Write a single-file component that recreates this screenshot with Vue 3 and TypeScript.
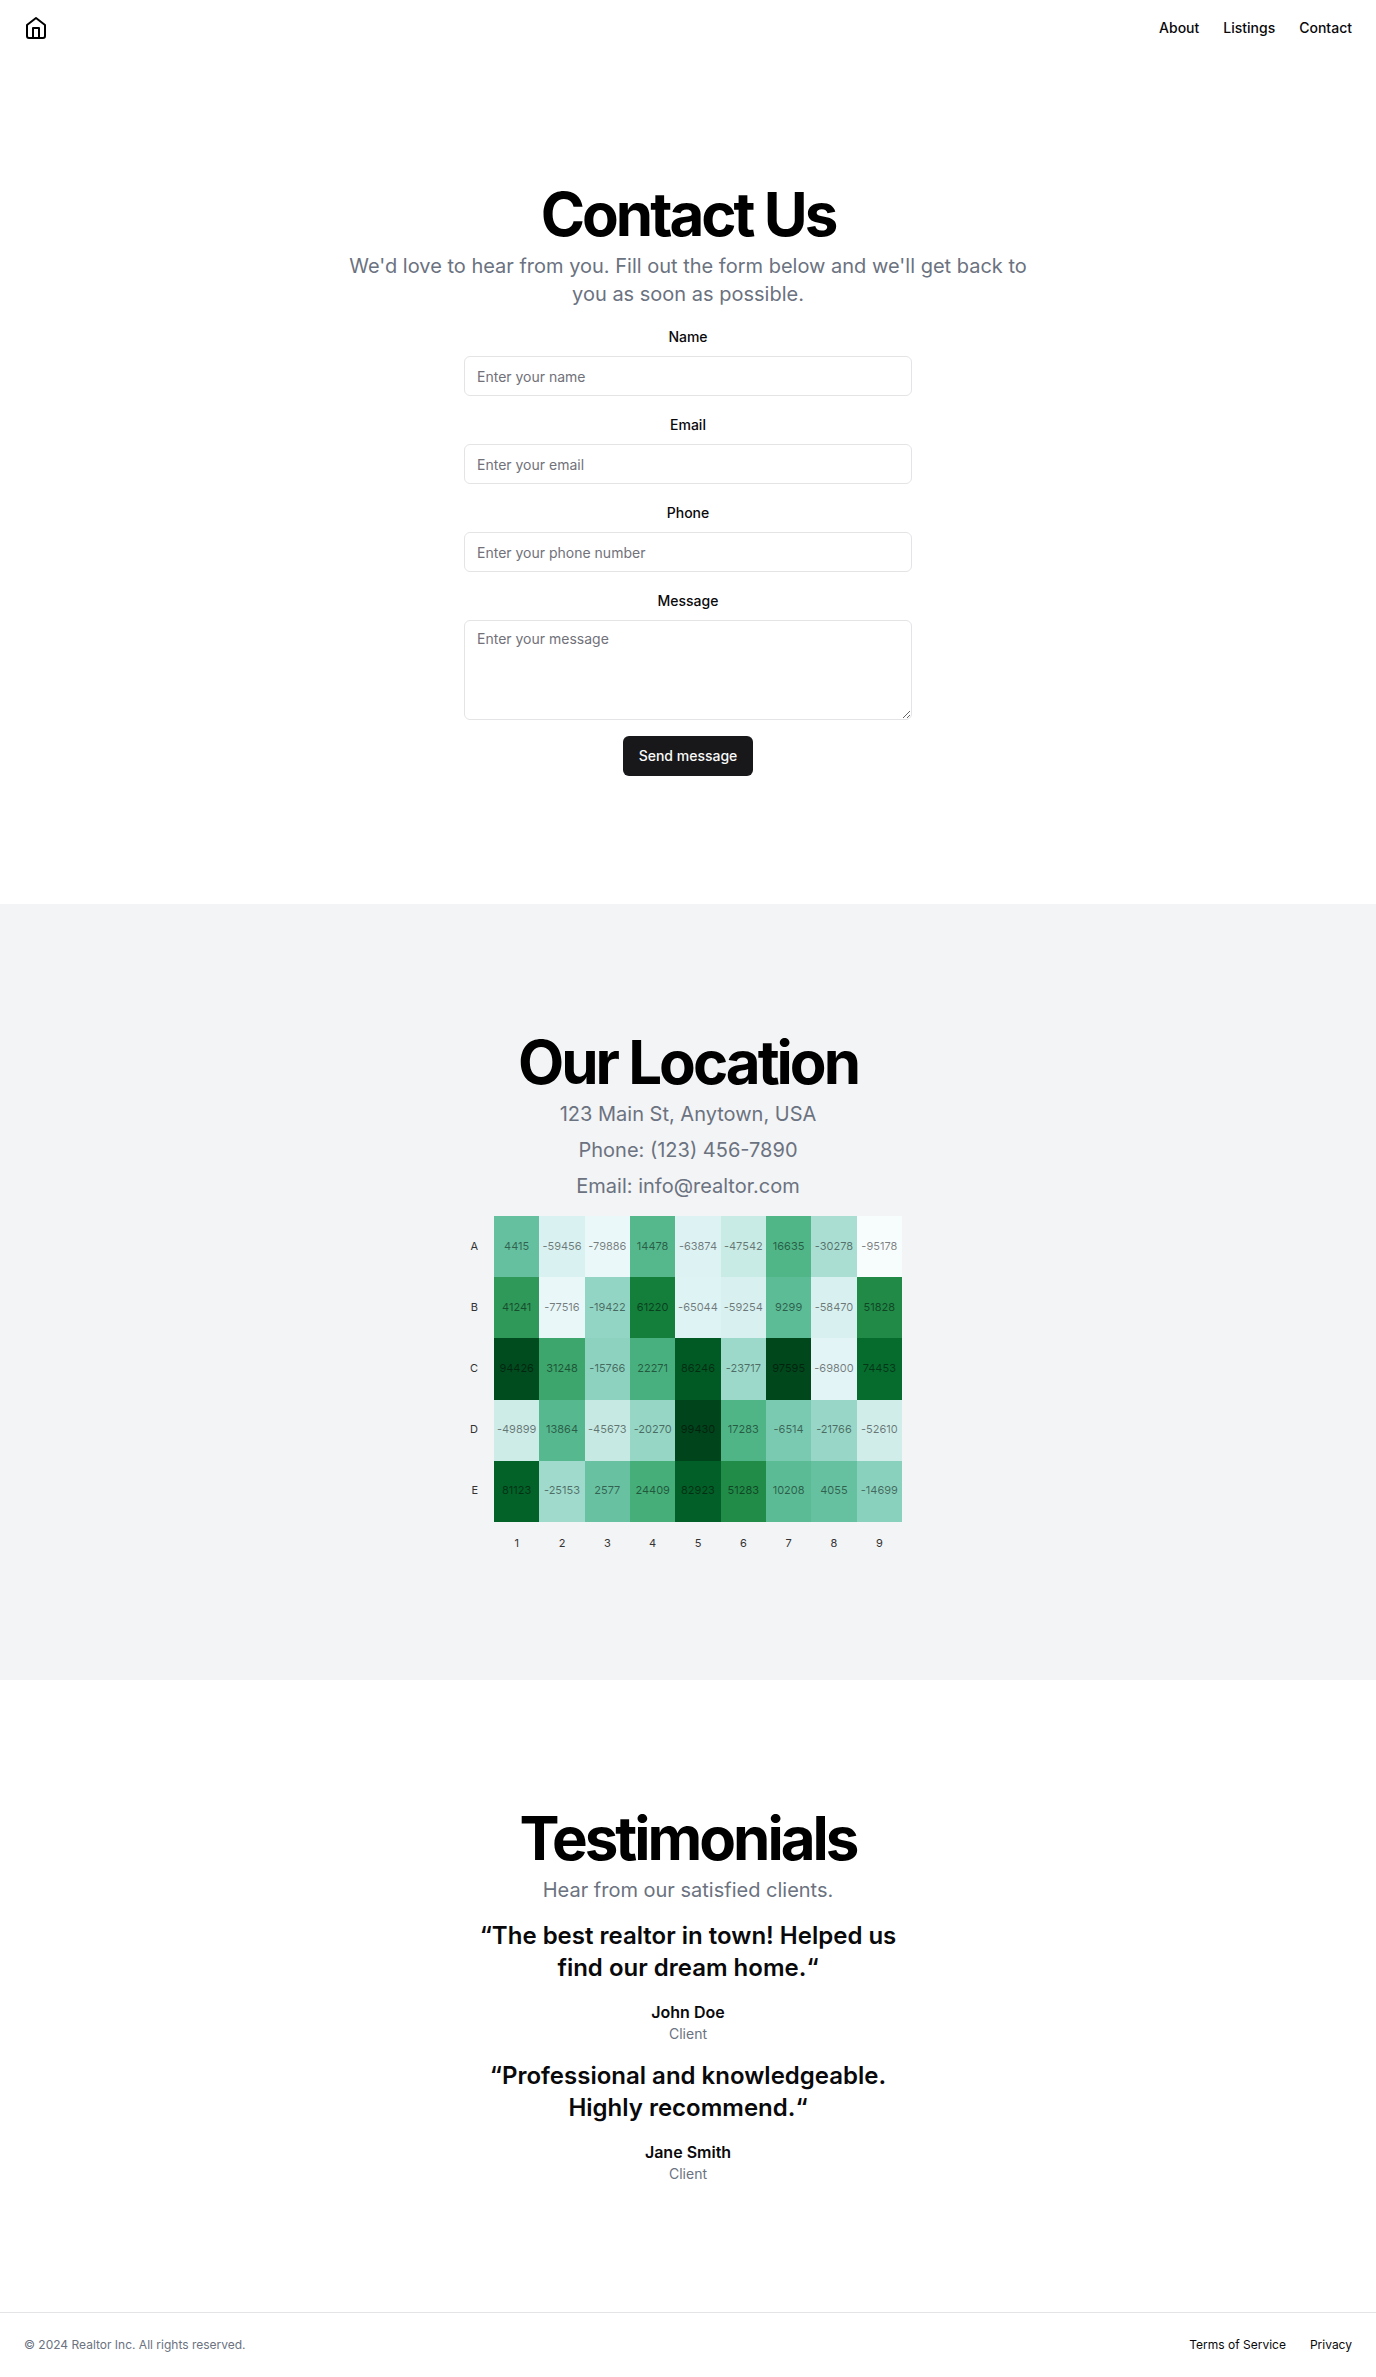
<script setup lang="ts">
import { ref } from 'vue'

interface Field {
  id: string
  label: string
  type: string
  placeholder: string
}

interface Testimonial {
  quote: string
  name: string
  role: string
}

interface HeatRow {
  id: string
  values: number[]
}

const fields: Field[] = [
  { id: 'name', label: 'Name', type: 'text', placeholder: 'Enter your name' },
  { id: 'email', label: 'Email', type: 'email', placeholder: 'Enter your email' },
  { id: 'phone', label: 'Phone', type: 'tel', placeholder: 'Enter your phone number' },
]

const form = ref<Record<string, string>>({ name: '', email: '', phone: '', message: '' })

const testimonials: Testimonial[] = [
  {
    quote: '“The best realtor in town! Helped us find our dream home.“',
    name: 'John Doe',
    role: 'Client',
  },
  {
    quote: '“Professional and knowledgeable. Highly recommend.“',
    name: 'Jane Smith',
    role: 'Client',
  },
]

const rows: HeatRow[] = [
  { id: 'A', values: [4415, -59456, -79886, 14478, -63874, -47542, 16635, -30278, -95178] },
  { id: 'B', values: [41241, -77516, -19422, 61220, -65044, -59254, 9299, -58470, 51828] },
  { id: 'C', values: [94426, 31248, -15766, 22271, 86246, -23717, 97595, -69800, 74453] },
  { id: 'D', values: [-49899, 13864, -45673, -20270, 99430, 17283, -6514, -21766, -52610] },
  { id: 'E', values: [81123, -25153, 2577, 24409, 82923, 51283, 10208, 4055, -14699] },
]

// Blue-green sequential scheme, light to dark
const stops: number[][] = [
  [247, 252, 253],
  [229, 245, 249],
  [204, 236, 230],
  [153, 216, 201],
  [102, 194, 164],
  [65, 174, 118],
  [35, 139, 69],
  [0, 109, 44],
  [0, 68, 27],
]

const all = rows.flatMap((row) => row.values)
const min = Math.min(...all)
const max = Math.max(...all)

// Uniform B-spline through one colour channel of the scheme
function channel(t: number, c: number): number {
  const n = stops.length - 1
  const i = Math.min(Math.floor(t * n), n - 1)
  const v1 = stops[i][c]
  const v2 = stops[i + 1][c]
  const v0 = i > 0 ? stops[i - 1][c] : 2 * v1 - v2
  const v3 = i < n - 1 ? stops[i + 2][c] : 2 * v2 - v1
  const u = t * n - i
  const u2 = u * u
  const u3 = u2 * u
  const sum =
    (1 - 3 * u + 3 * u2 - u3) * v0 +
    (4 - 6 * u2 + 3 * u3) * v1 +
    (1 + 3 * u + 3 * u2 - 3 * u3) * v2 +
    u3 * v3
  return Math.max(0, Math.min(255, Math.round(sum / 6)))
}

function cellColor(value: number): string {
  const t = (value - min) / (max - min)
  return `rgb(${channel(t, 0)}, ${channel(t, 1)}, ${channel(t, 2)})`
}
</script>

<template>
  <div class="page">
    <header class="header">
      <a href="#" class="logo" aria-label="Home">
        <svg viewBox="0 0 24 24" width="24" height="24" fill="none" stroke="currentColor" stroke-width="2" stroke-linecap="round" stroke-linejoin="round" aria-hidden="true">
          <path d="m3 9 9-7 9 7v11a2 2 0 0 1-2 2H5a2 2 0 0 1-2-2z" />
          <polyline points="9 22 9 12 15 12 15 22" />
        </svg>
      </a>
      <nav class="nav">
        <a href="#">About</a>
        <a href="#">Listings</a>
        <a href="#">Contact</a>
      </nav>
    </header>

    <main>
      <section class="section">
        <div class="intro">
          <h2>Contact Us</h2>
          <p>We'd love to hear from you. Fill out the form below and we'll get back to you as soon as possible.</p>
        </div>
        <form class="narrow form" @submit.prevent>
          <div v-for="field in fields" :key="field.id" class="field">
            <label :for="field.id">{{ field.label }}</label>
            <input :id="field.id" v-model="form[field.id]" :type="field.type" :placeholder="field.placeholder" />
          </div>
          <div class="field">
            <label for="message">Message</label>
            <textarea id="message" v-model="form.message" placeholder="Enter your message"></textarea>
          </div>
          <button type="submit">Send message</button>
        </form>
      </section>

      <section class="section muted">
        <div class="intro">
          <h2>Our Location</h2>
          <p>123 Main St, Anytown, USA</p>
          <p>Phone: (123) 456-7890</p>
          <p>Email: info@realtor.com</p>
        </div>
        <div class="narrow chart">
          <table class="heatmap">
            <tbody>
              <tr v-for="row in rows" :key="row.id">
                <th scope="row">{{ row.id }}</th>
                <td v-for="(value, i) in row.values" :key="i" :style="{ backgroundColor: cellColor(value) }">{{ value }}</td>
              </tr>
            </tbody>
            <tfoot>
              <tr>
                <td></td>
                <th v-for="n in 9" :key="n" scope="col">{{ n }}</th>
              </tr>
            </tfoot>
          </table>
        </div>
      </section>

      <section class="section">
        <div class="intro">
          <h2>Testimonials</h2>
          <p>Hear from our satisfied clients.</p>
        </div>
        <div class="narrow quotes">
          <figure v-for="item in testimonials" :key="item.name">
            <blockquote>{{ item.quote }}</blockquote>
            <figcaption>
              <div class="name">{{ item.name }}</div>
              <div class="role">{{ item.role }}</div>
            </figcaption>
          </figure>
        </div>
      </section>
    </main>

    <footer class="footer">
      <p>© 2024 Realtor Inc. All rights reserved.</p>
      <nav>
        <a href="#">Terms of Service</a>
        <a href="#">Privacy</a>
      </nav>
    </footer>
  </div>
</template>

<style>
body {
  margin: 0;
  background: #fff;
}
</style>

<style scoped>
.page {
  font-family: Inter, 'Liberation Sans', sans-serif;
  font-size: 16px;
  line-height: 24px;
  color: #09090b;
}

.page * {
  box-sizing: border-box;
}

a {
  color: inherit;
  text-decoration: none;
}

h2,
p,
figure,
blockquote {
  margin: 0;
}

.header {
  display: flex;
  align-items: center;
  justify-content: space-between;
  height: 56px;
  padding: 0 24px;
}

.logo {
  display: flex;
  color: #000;
}

.nav {
  display: flex;
  gap: 24px;
  font-size: 14px;
  font-weight: 500;
  line-height: 20px;
}

.section {
  display: flex;
  flex-direction: column;
  align-items: center;
  gap: 16px;
  padding: 128px 24px;
  text-align: center;
}

.muted {
  background: #f3f4f6;
}

.intro {
  display: flex;
  flex-direction: column;
  gap: 8px;
  width: 100%;
  max-width: 700px;
}

h2 {
  font-size: 60px;
  font-weight: 700;
  line-height: 60px;
  letter-spacing: -3px;
  color: #000;
}

.intro p {
  font-size: 20px;
  line-height: 28px;
  color: #6b7280;
}

.narrow {
  width: 100%;
  max-width: 448px;
}

.form {
  display: flex;
  flex-direction: column;
  align-items: center;
  gap: 16px;
}

.field {
  width: 100%;
}

label {
  font-size: 14px;
  font-weight: 500;
  line-height: 14px;
}

input,
textarea {
  display: block;
  width: 100%;
  margin: 8px 0 0;
  padding: 8px 12px;
  border: 1px solid #e4e4e7;
  border-radius: 6px;
  background: #fff;
  color: #09090b;
  font-family: inherit;
  font-size: 14px;
  line-height: 20px;
}

input {
  height: 40px;
}

textarea {
  height: 100px;
}

input::placeholder,
textarea::placeholder {
  color: #71717a;
}

button {
  height: 40px;
  padding: 8px 16px;
  border: 0;
  border-radius: 6px;
  background: #18181b;
  color: #fafafa;
  font-family: inherit;
  font-size: 14px;
  font-weight: 500;
  line-height: 20px;
}

.chart {
  display: flex;
  aspect-ratio: 4 / 3;
  padding-right: 10px;
}

.heatmap {
  width: 100%;
  height: 100%;
  table-layout: fixed;
  border-collapse: collapse;
  font-size: 11px;
  line-height: 16px;
}

.heatmap td {
  padding: 0 0 2px;
  color: rgba(0, 0, 0, 0.5);
}

.heatmap th {
  padding: 0 0 2px;
  font-weight: 400;
  color: #333;
}

.heatmap tbody th,
.heatmap tfoot td {
  width: 30px;
  padding-right: 16px;
  text-align: right;
}

.heatmap tfoot tr {
  height: 30px;
}

.heatmap tfoot th {
  padding: 12px 0 0;
}

.quotes {
  display: flex;
  flex-direction: column;
  gap: 16px;
}

figure {
  display: flex;
  flex-direction: column;
  gap: 16px;
}

blockquote {
  font-size: 24px;
  font-weight: 600;
  line-height: 32px;
}

.name {
  font-weight: 600;
}

.role {
  font-size: 14px;
  line-height: 20px;
  color: #6b7280;
}

.footer {
  display: flex;
  align-items: center;
  justify-content: space-between;
  padding: 24px;
  border-top: 1px solid #e4e4e7;
  font-size: 12px;
  line-height: 16px;
}

.footer p {
  color: #6b7280;
}

.footer nav {
  display: flex;
  gap: 24px;
}
</style>
